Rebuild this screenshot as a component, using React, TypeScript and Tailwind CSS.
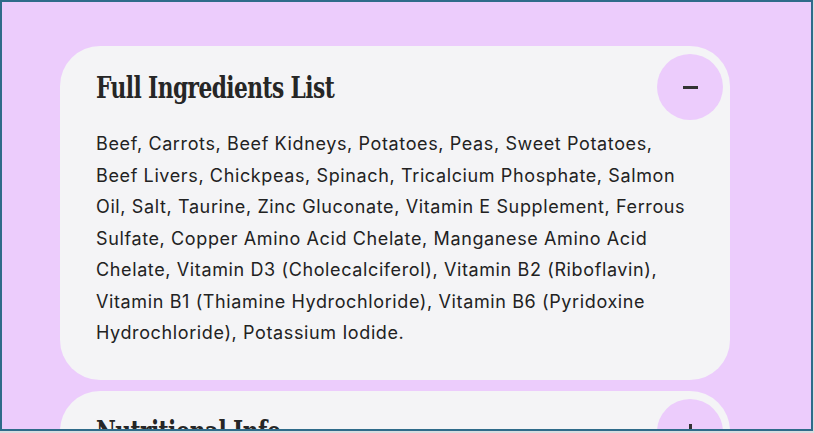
const headingFont = { fontFamily: '"DejaVu Serif", "Liberation Serif", serif' };
const bodyFont = { fontFamily: 'Inter, "Liberation Sans", sans-serif' };

export default function App() {
  return (
    <div className="w-[814px] h-[433px] bg-[#d9dcdf] overflow-hidden">
      <div className="w-[813px] h-[431px] border-2 border-[#2f6b8a] bg-[#ecccfc] overflow-hidden">
        <div className="pt-[44px] pl-[58px] w-[728px] flex flex-col gap-[11px]">
          <section className="bg-[#f4f4f6] rounded-[40px] pb-[31px]">
            <div className="flex items-center justify-between pt-2 pr-[7px] pl-9">
              <h2 className="text-[30px] font-bold text-[#262626] tracking-[-0.8px] origin-left scale-x-[0.725]" style={headingFont}>
                Full Ingredients List
              </h2>
              <button className="w-[66px] h-[66px] rounded-full bg-[#ecccfc] flex items-center justify-center">
                <span className="block w-[15px] h-[3px] bg-[#333]"></span>
              </button>
            </div>
            <p className="px-9 mt-[8px] text-[18px] leading-[31.5px] tracking-[0.62px] text-[#222]" style={bodyFont}>
              Beef, Carrots, Beef Kidneys, Potatoes, Peas, Sweet Potatoes, Beef Livers, Chickpeas, Spinach, Tricalcium Phosphate, Salmon Oil, Salt, Taurine, Zinc Gluconate, Vitamin E Supplement, Ferrous Sulfate, Copper Amino Acid Chelate, Manganese Amino Acid Chelate, Vitamin D3 (Cholecalciferol), Vitamin B2 (Riboflavin), Vitamin B1 (Thiamine Hydrochloride), Vitamin B6 (Pyridoxine Hydrochloride), Potassium Iodide.
            </p>
          </section>
          <section className="bg-[#f4f4f6] rounded-[40px] pb-[31px]">
            <div className="flex items-center justify-between pt-2 pr-[7px] pl-9">
              <h2 className="text-[30px] font-bold text-[#262626] tracking-[-0.8px] origin-left scale-x-[0.725]" style={headingFont}>
                Nutritional Info
              </h2>
              <button className="w-[66px] h-[66px] rounded-full bg-[#ecccfc] flex items-center justify-center relative">
                <span className="block w-[15px] h-[3px] bg-[#333]"></span>
                <span className="absolute w-[3px] h-[15px] bg-[#333]"></span>
              </button>
            </div>
          </section>
        </div>
      </div>
    </div>
  );
}
